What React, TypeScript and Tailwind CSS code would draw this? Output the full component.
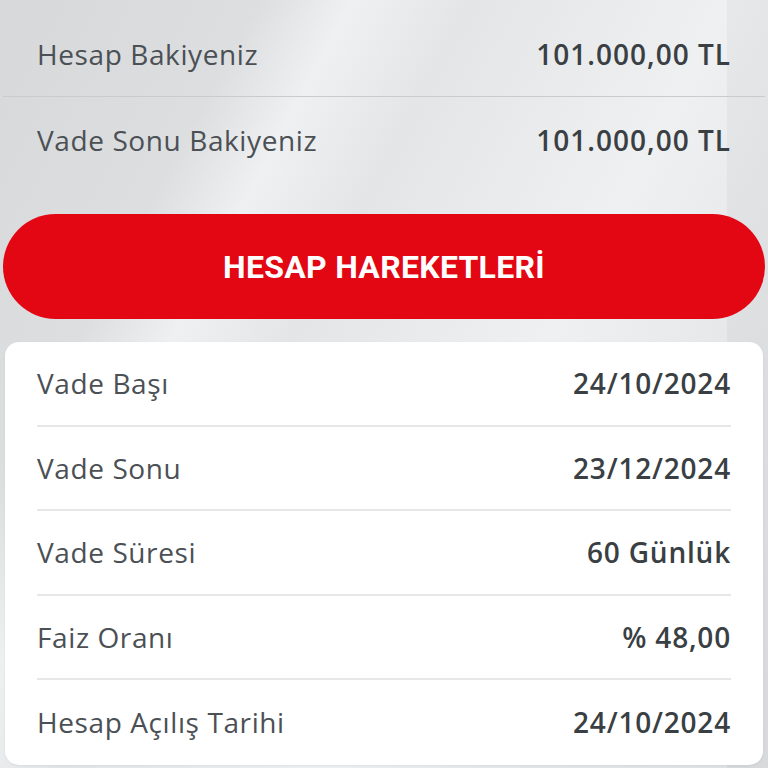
import React from 'react';

const balances = [
  { label: 'Hesap Bakiyeniz', value: '101.000,00 TL' },
  { label: 'Vade Sonu Bakiyeniz', value: '101.000,00 TL' },
];

const details = [
  { label: 'Vade Başı', value: '24/10/2024' },
  { label: 'Vade Sonu', value: '23/12/2024' },
  { label: 'Vade Süresi', value: '60 Günlük' },
  { label: 'Faiz Oranı', value: '% 48,00' },
  { label: 'Hesap Açılış Tarihi', value: '24/10/2024' },
];

export default function App() {
  return (
    <div
      className="w-[768px] h-[768px] overflow-hidden bg-[#e6e8ea] bg-[linear-gradient(90deg,transparent_94.6%,rgba(0,0,0,0.035)_94.6%),linear-gradient(118deg,#d6d8da_0%,#dcdee0_22%,#eef0f2_30%,#e3e5e7_40%,#eef0f2_62%,#e4e6e8_80%,#dfe1e3_100%)]"
      style={{ fontFamily: '"Open Sans", "Noto Sans", sans-serif' }}
    >
      {/* Balances */}
      <div className="pt-[12px]">
        {balances.map((b, i) => (
          <div
            key={b.label}
            className={`mx-[3px] h-[85px] px-[34px] flex items-center justify-between ${i === 0 ? 'border-b border-[#c9cbcd]' : ''}`}
          >
            <span className="text-[28px] text-[#4b5055] tracking-[0.6px]">{b.label}</span>
            <span className="text-[28px] font-semibold text-[#3a3f44] tracking-[1px]">{b.value}</span>
          </div>
        ))}
      </div>

      {/* Button */}
      <button className="mt-[32px] mx-[3px] w-[762px] h-[105px] rounded-full bg-[#e30613] flex items-center justify-center">
        <span
          className="text-[32px] font-bold text-white tracking-[0.3px]"
          style={{ fontFamily: 'Roboto, "Liberation Sans", sans-serif' }}
        >
          HESAP HAREKETLERİ
        </span>
      </button>

      {/* Details card */}
      <div className="mt-[23px] mx-[5px] bg-white rounded-[14px] px-[32px] shadow-[0_1px_3px_rgba(0,0,0,0.06)]">
        {details.map((d, i) => (
          <div
            key={d.label}
            className={`h-[84.5px] flex items-center justify-between ${i < details.length - 1 ? 'border-b-2 border-[#e6e7e8]' : ''}`}
          >
            <span className="text-[28px] text-[#4b5055] tracking-[0.6px]">{d.label}</span>
            <span className="text-[28px] font-semibold text-[#3a3f44] tracking-[0.8px]">{d.value}</span>
          </div>
        ))}
      </div>
    </div>
  );
}
